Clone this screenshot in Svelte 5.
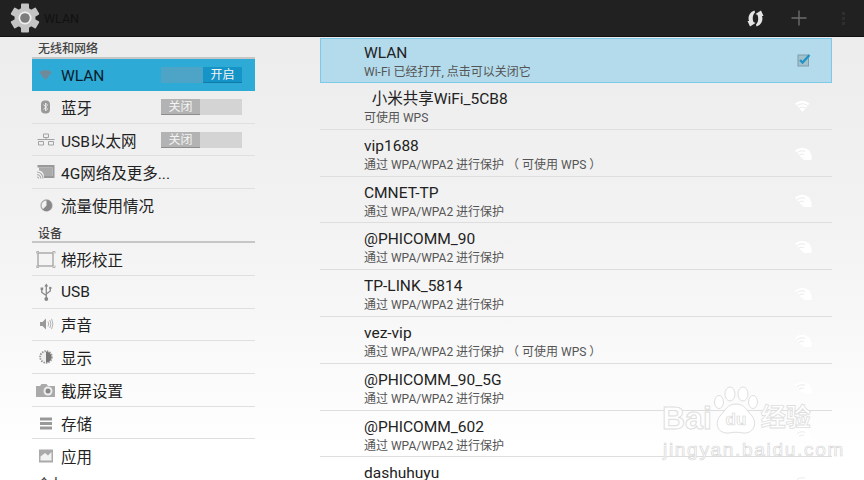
<script>
  const navGroups = [
    {
      title: "无线和网络",
      rows: [
        { label: "WLAN", icon: "wifi", toggle: "on", selected: true },
        { label: "蓝牙", icon: "bt", toggle: "off" },
        { label: "USB以太网", icon: "eth", toggle: "off" },
        { label: "4G网络及更多...", icon: "cast" },
        { label: "流量使用情况", icon: "usage" }
      ]
    },
    {
      title: "设备",
      rows: [
        { label: "梯形校正", icon: "keystone" },
        { label: "USB", icon: "usb" },
        { label: "声音", icon: "sound" },
        { label: "显示", icon: "display" },
        { label: "截屏设置", icon: "camera" },
        { label: "存储", icon: "storage" },
        { label: "应用", icon: "apps" }
      ]
    },
    { title: "个人", rows: [] }
  ];

  const SECURED = "通过 WPA/WPA2 进行保护";
  const SECURED_WPS = "通过 WPA/WPA2 进行保护 （ 可使用 WPS ）";

  const networks = [
    { name: "\u00a0\u00a0小米共享WiFi_5CB8", note: "可使用 WPS", open: true },
    { name: "vip1688", note: SECURED_WPS },
    { name: "CMNET-TP", note: SECURED },
    { name: "@PHICOMM_90", note: SECURED },
    { name: "TP-LINK_5814", note: SECURED },
    { name: "vez-vip", note: SECURED_WPS },
    { name: "@PHICOMM_90_5G", note: SECURED },
    { name: "@PHICOMM_602", note: SECURED },
    { name: "dashuhuyu", note: SECURED }
  ];

  const gearTeeth = [0, 60, 120, 180, 240, 300];
</script>

{#snippet navIcon(name)}
  <svg class="nav-icon" viewBox="0 0 24 24" width="24" height="24" aria-hidden="true">
    {#if name === "wifi"}
      <path d="M5 9Q11.500 5 18 9L11.500 17Z" fill="#6f8b99" />
    {:else if name === "bt"}
      <rect x="7" y="5.500" width="9" height="13" rx="4" fill="#999" />
      <path d="M9.500 9.500 13.500 14 11.500 16V8L13.500 10 9.500 14.500" fill="none" stroke="#eee" stroke-width=".9" />
    {:else if name === "eth"}
      <path d="M9.500 6h5v3.500h-5zM4.500 13.500h5V17h-5zM14.500 13.500h5V17h-5z" fill="none" stroke="#a2a2a2" stroke-width="1" />
      <path d="M12 9.500v2M3.500 11.500h17" stroke="#a2a2a2" stroke-width="1" />
    {:else if name === "cast"}
      <path d="M3.500 5h17v13H10v-2h8.500V7.500H3.500z" fill="#999" />
      <path d="M5 7.500h13.500V16H10Q9.500 11 5 10.500z" fill="#aaa" />
      <path d="M3 12Q8.500 12.500 9 18.500M3 14.500Q6.500 15 6.800 18.500M3 17Q4.500 17 4.700 18.500" fill="none" stroke="#aaa" stroke-width="1.100" />
    {:else if name === "usage"}
      <circle cx="12.500" cy="12.500" r="5.500" fill="none" stroke="#aaa" stroke-width="1.300" />
      <path d="M12.500 7A5.500 5.500 0 1 1 8.600 16.400L12.500 12.500Z" fill="#888" />
    {:else if name === "keystone"}
      <rect x="4" y="6" width="15" height="13" fill="none" stroke="#999" stroke-width="1.200" />
      <path d="M2.700 6.500V4.500H5M18.500 4.500h2.500V6.500M2.700 18.500v2H5M18.500 20.500h2.500v-2" fill="none" stroke="#aaa" stroke-width=".9" />
    {:else if name === "usb"}
      <g transform="translate(-.7 0)">
        <path d="M13 5v14M13 15.500 8.500 12.500V10M13 14l4-3V8.500" fill="none" stroke="#888" stroke-width="1.300" />
        <circle cx="13" cy="19" r="1.900" fill="#888" />
        <path d="M13 3.500l2 3h-4zM7.300 7.500h2.600V10H7.300z" fill="#888" />
        <circle cx="17" cy="8" r="1.300" fill="#888" />
      </g>
    {:else if name === "sound"}
      <path d="M6 10h2.500L12 6.500v11L8.500 14H6z" fill="#999" />
      <path d="M14 9.500q1.300 2.500 0 5M15.800 8q2.200 4 0 8M17.600 6.800q2.700 5.200 0 10.400" fill="none" stroke="#aaa" stroke-width=".9" />
    {:else if name === "display"}
      <circle cx="12" cy="12" r="5.800" fill="none" stroke="#999" stroke-width="2" stroke-dasharray="1.500 1" />
      <path d="M12 6.500A5.500 5.500 0 0 1 12 17.500Z" fill="#777" />
      <path d="M12 7.500A4.500 4.500 0 0 0 12 16.500Z" fill="#eee" />
    {:else if name === "camera"}
      <path d="M2 8H6L7.500 6h5L14 8h7V19H2z" fill="#aaa" />
      <circle cx="14" cy="13" r="4.500" fill="#eee" />
      <circle cx="14" cy="13" r="2.500" fill="#888" />
    {:else if name === "storage"}
      <path d="M6 6.500h12v3H6zM6 11h12v3H6zM6 15.500h12v3H6z" fill="#999" />
    {:else if name === "apps"}
      <rect x="5" y="5.500" width="14" height="13" fill="#aaa" />
      <path d="M6.500 16.500v-4L11 9l3 2.500L17.500 8v8.500z" fill="#f2f2f2" />
    {/if}
  </svg>
{/snippet}

{#snippet signal(open)}
  <svg class="signal" viewBox="0 0 18 14" width="18" height="14" aria-hidden="true">
    <path d="M1 4.500Q8 -1 15.500 4.500L8.500 13Z" fill="#fff" />
    <path d="M3 6.500Q8.500 3 13.500 6.500M5 9Q8.500 7 11.500 9" fill="none" stroke="#e4e4e4" stroke-width=".8" />
    {#if !open}
      <path d="M10.500 8.500V7.500a3 3 0 0 1 6 0V8.500h1v5.500h-8V8.500z" fill="#fff" />
    {/if}
  </svg>
{/snippet}

<div class="screen">
  <header class="bar">
    <svg class="gear" viewBox="0 0 30 30" width="30" height="30" aria-hidden="true">
      {#each gearTeeth as angle}
        <rect x="11" y="0.500" width="8" height="8" rx="1" fill="#c4c4c4" transform="rotate({angle} 15 15)" />
      {/each}
      <circle cx="15" cy="15" r="10.500" fill="#c4c4c4" />
      <circle cx="15" cy="15" r="6.500" fill="#f0f0f0" />
      <circle cx="15" cy="15" r="4.800" fill="#7b7b7b" />
    </svg>
    <span class="bar-title">WLAN</span>
    <svg class="bar-action refresh" viewBox="0 0 21 21" width="21" height="21" aria-hidden="true">
      <path d="M9.500 2.500C5 4 2.500 8 4 13L2.500 13 5 18.500 10.500 15 8.500 14C7 10 8 6.500 10 4.500Z" fill="#e4e4e4" />
      <path d="M11.500 18.500C16 17 18.500 13 17 8L18.500 8 16 2.500 10.500 6 12.500 7C14 11 13 14.500 11 16.500Z" fill="#e4e4e4" />
    </svg>
    <svg class="bar-action plus" viewBox="0 0 18 18" width="18" height="18" aria-hidden="true">
      <path d="M9 1.500v15M1.500 9h15" stroke="#6c6c6c" stroke-width="1.400" />
    </svg>
    <div class="overflow" aria-hidden="true"><i></i><i></i><i></i></div>
  </header>

  <div class="content">
    <nav class="nav">
      {#each navGroups as group}
        <div class="nav-title">{group.title}</div>
        {#each group.rows as row, i}
          <div class="nav-row" class:selected={row.selected} class:last={i === group.rows.length - 1}>
            {@render navIcon(row.icon)}
            <span class="nav-label">{row.label}</span>
            {#if row.toggle === "on"}
              <div class="toggle on"><span>开启</span></div>
            {:else if row.toggle === "off"}
              <div class="toggle"><span>关闭</span></div>
            {/if}
          </div>
        {/each}
      {/each}
    </nav>

    <section class="list">
      <div class="net active">
        <div class="net-text">
          <div class="net-name">WLAN</div>
          <div class="net-note">Wi-Fi 已经打开, 点击可以关闭它</div>
        </div>
        <svg class="check" viewBox="0 0 14 14" width="14" height="14" aria-hidden="true">
          <rect x="1" y="2" width="10.500" height="11" fill="#a3c0cd" stroke="#7f9eac" />
          <path d="M3 7l2.500 2.500L12.500 2" fill="none" stroke="#1f93c6" stroke-width="2.300" />
        </svg>
      </div>
      {#each networks as net}
        <div class="net">
          <div class="net-text">
            <div class="net-name">{net.name}</div>
            <div class="net-note">{net.note}</div>
          </div>
          {@render signal(net.open)}
        </div>
      {/each}
    </section>
  </div>

  <div class="watermark" aria-hidden="true">
    <div class="mark-top">
      <span class="mark-word">Bai</span>
      <svg class="paw" viewBox="0 0 46 50" width="46" height="50">
        <g fill="#fff" stroke="#dedede" stroke-width="1">
          <ellipse cx="6" cy="16" rx="4.500" ry="6.500" />
          <ellipse cx="17" cy="8" rx="5" ry="7" />
          <ellipse cx="30" cy="8" rx="5" ry="7" />
          <ellipse cx="40" cy="16" rx="4.500" ry="6.500" />
          <path d="M23 18C32 18 34 25 39 30 45 38 40 48 30 47 26 46 20 46 16 47 5 48 1 38 7 30 12 25 14 18 23 18Z" />
        </g>
        <text x="23" y="39" text-anchor="middle" class="paw-text">du</text>
      </svg>
      <span class="mark-cn">经验</span>
    </div>
    <div class="mark-url">jingyan.baidu.com</div>
  </div>
</div>

<style>
  :global(body) {
    margin: 0;
  }

  .screen {
    position: relative;
    width: 864px;
    height: 480px;
    overflow: hidden;
    display: flex;
    flex-direction: column;
    background: linear-gradient(#ebebeb, #f3f3f3 50%, #ffffff 95%);
    font-family: Roboto, "Noto Sans CJK SC", sans-serif;
    color: #2a2a2a;
  }

  .bar {
    flex: none;
    height: 37px;
    box-sizing: border-box;
    display: flex;
    align-items: center;
    padding-left: 10px;
    background: #212121;
    border-bottom: 1px solid #111;
  }

  .gear {
    flex: none;
  }

  .bar-title {
    margin-left: 4px;
    font-size: 12.500px;
    color: #111;
  }

  .bar-action {
    flex: none;
  }

  .refresh {
    margin-left: auto;
  }

  .plus {
    margin-left: 24px;
  }

  .overflow {
    display: flex;
    flex-direction: column;
    gap: 2px;
    margin: 0 19px 0 34px;
  }

  .overflow i {
    display: block;
    width: 3px;
    height: 3px;
    background: #2e2e2e;
  }

  .content {
    flex: 1;
    min-height: 0;
    display: flex;
  }

  .nav {
    flex: none;
    width: 223px;
    margin-left: 32px;
  }

  .nav-title {
    height: 21.500px;
    box-sizing: border-box;
    padding: 4px 0 0 6px;
    border-bottom: 2px solid #c6c6c6;
    font-size: 12px;
    line-height: 16px;
    font-weight: 500;
    color: #444;
  }

  .nav-title:first-child {
    height: 22px;
  }

  .nav-row {
    height: 32.700px;
    box-sizing: border-box;
    display: flex;
    align-items: center;
    padding-left: 2px;
    border-bottom: 1px solid #dfdfdf;
  }

  .nav-row.last {
    border-bottom: 0;
  }

  .nav-row.selected {
    height: 32px;
    background: #2eaad6;
    border-bottom: 0;
  }

  .nav-icon {
    flex: none;
  }

  .nav-label {
    margin-left: 3px;
    font-size: 15.500px;
    color: #222;
    white-space: nowrap;
  }

  .selected .nav-label {
    margin-top: 2px;
    color: #08202c;
  }

  .toggle {
    flex: none;
    width: 81px;
    height: 16px;
    margin-left: auto;
    margin-right: 13px;
    display: flex;
    background: #d4d4d4;
    font-size: 12px;
    line-height: 17px;
    color: #f4f4f4;
    text-align: center;
  }

  .toggle span {
    width: 39px;
    background: #b3b3b3;
    border-bottom: 1px solid #8d8d8d;
    box-sizing: border-box;
  }

  .toggle.on {
    justify-content: flex-end;
    background: #4ea4c6;
  }

  .toggle.on span {
    background: #1594c8;
    border-bottom-color: #0f7ba8;
  }

  .list {
    flex: none;
    width: 512px;
    margin-left: 65px;
    padding-top: 1px;
  }

  .net {
    height: 46.800px;
    box-sizing: border-box;
    display: flex;
    align-items: flex-start;
    padding-left: 44px;
    border-bottom: 1px solid #dedede;
  }

  .net.active {
    height: 45px;
    background: #b3dbeb;
    border: 1px solid #7ec9e8;
    padding-left: 43px;
  }

  .net-text {
    flex: 1;
    min-width: 0;
  }

  .net-name {
    margin-top: 6px;
    font-size: 15.500px;
    line-height: 20px;
    color: #222;
    white-space: nowrap;
  }

  .active .net-name {
    margin-top: 4px;
  }

  .net-note {
    margin-top: 1px;
    font-size: 12px;
    line-height: 17px;
    color: #555;
    white-space: nowrap;
  }

  .signal {
    flex: none;
    margin: 16px 20px 0 0;
  }

  .check {
    flex: none;
    margin: 14px 20px 0 0;
  }

  .watermark {
    position: absolute;
    left: 662px;
    top: 386px;
    width: 170px;
    color: #fff;
  }

  .mark-top {
    display: flex;
    align-items: flex-end;
  }

  .mark-word {
    font-family: "Liberation Sans", sans-serif;
    font-size: 32px;
    line-height: 36px;
    font-weight: 700;
    color: #fff;
    -webkit-text-stroke: 1px #dedede;
  }

  .paw {
    flex: none;
    margin-left: 1px;
  }

  .paw-text {
    font-family: "Liberation Sans", sans-serif;
    font-size: 17px;
    font-weight: 700;
    fill: #fff;
    stroke: #d8d8d8;
    stroke-width: 0.700px;
  }

  .mark-cn {
    margin-left: 2px;
    font-size: 25px;
    line-height: 36px;
    font-weight: 700;
    color: #fff;
    -webkit-text-stroke: 0.800px #dedede;
  }

  .mark-url {
    margin-top: 4px;
    margin-left: 1px;
    font-family: "Liberation Sans", sans-serif;
    font-size: 19px;
    line-height: 20px;
    letter-spacing: 1.700px;
    color: #fff;
    -webkit-text-stroke: 0.700px #d8d8d8;
    white-space: nowrap;
  }
</style>
